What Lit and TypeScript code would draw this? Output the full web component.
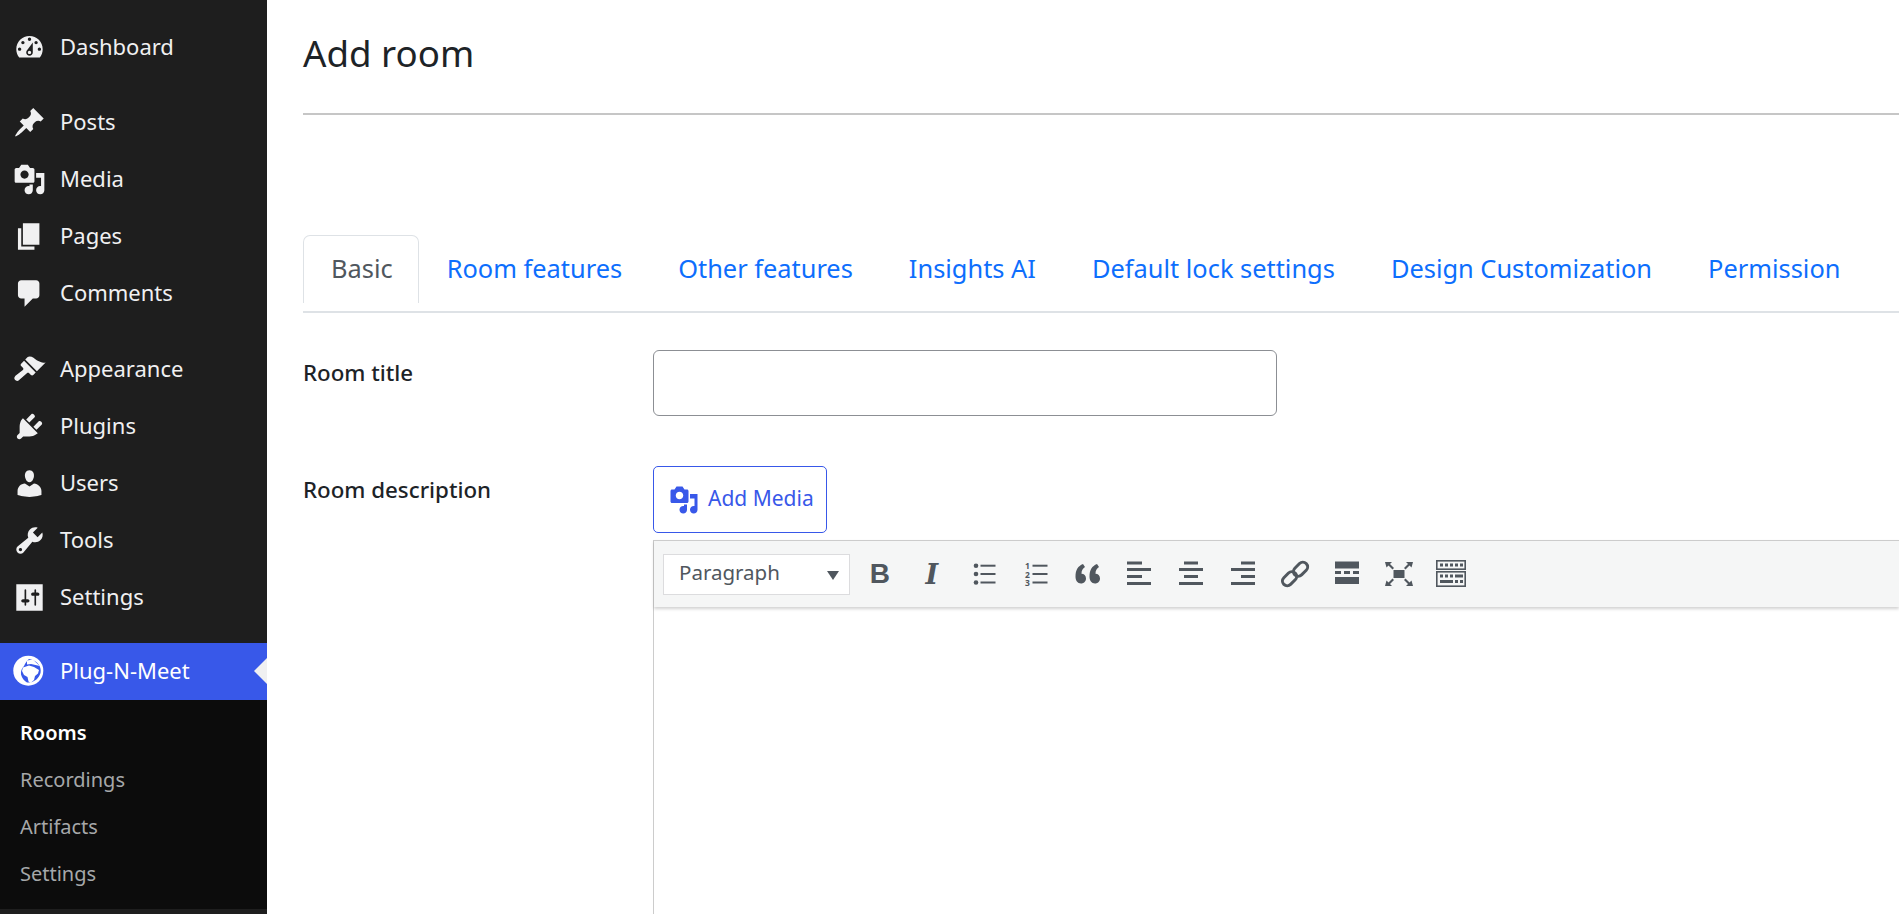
import { LitElement, html, svg, css } from "lit";
import { customElement } from "lit/decorators.js";

const dash = (d: string) => html`<svg class="dash" viewBox="0 0 20 20"><path fill-rule="evenodd" d=${d}></path></svg>`;

const MEDIA =
  "M13 11V4c0-.55-.45-1-1-1h-1.67L9 1H5L3.67 3H2c-.55 0-1 .45-1 1v7c0 .55.45 1 1 1h10c.55 0 1-.45 1-1zM7 4.5c1.38 0 2.5 1.12 2.5 2.5S8.38 9.5 7 9.5 4.5 8.38 4.5 7 5.62 4.5 7 4.5zM14 6h5v10.5c0 1.38-1.12 2.5-2.5 2.5S14 17.88 14 16.5s1.12-2.5 2.5-2.5c.17 0 .34.02.5.05V9h-3V6zm-4 8.05V13h2v3.5c0 1.38-1.12 2.5-2.5 2.5S7 17.88 7 16.5 8.12 14 9.5 14c.17 0 .34.02.5.05z";

const GROUP_ONE = [
  ["Posts", "M10.44 3.02l1.82-1.82 6.36 6.35-1.83 1.82c-1.05-.68-2.48-.57-3.41.36l-.75.75c-.92.93-1.04 2.35-.35 3.41l-1.83 1.82-2.41-2.41-2.8 2.79c-.42.42-3.38 2.71-3.8 2.29s1.86-3.39 2.28-3.81l2.79-2.79L4.1 9.36l1.83-1.82c1.05.69 2.48.57 3.4-.36l.75-.75c.93-.92 1.05-2.35.36-3.41z"],
  ["Media", MEDIA],
  ["Pages", "M6 15V2h10v13H6zm-1 1h8v2H3V5h2v11z"],
  ["Comments", "M5 2h9c1.1 0 2 .9 2 2v7c0 1.1-.9 2-2 2h-2l-5 5v-5H5c-1.1 0-2-.9-2-2V4c0-1.1.9-2 2-2z"],
];

const GROUP_TWO = [
  ["Appearance", "M14.48 11.06L7.41 3.99l1.5-1.5c.5-.56 2.3-.47 3.51.32 1.21.8 1.43 1.28 2.91 2.1 1.18.64 2.45 1.26 4.45.85zm-.71.71L6.7 4.7 4.93 6.47c-.39.39-.39 1.02 0 1.41l1.06 1.06c.39.39.39 1.03 0 1.42L1.5 13.8c-.9.9-.9 1.9-.2 2.6.7.7 1.7.7 2.6-.2l4.500-3.900c.39-.39 1.03-.39 1.42 0l1.06 1.06c.39.39 1.02.39 1.41 0z"],
  ["Plugins", "M13.11 4.36L9.87 7.6 8 5.73l3.24-3.24c.35-.34 1.05-.2 1.56.32.52.51.66 1.21.31 1.55zm-8 1.77l.91-1.12 9.01 9.01-1.19.84c-.71.71-2.63 1.16-3.82 1.16H6.14L4.9 17.26c-.59.59-1.54.59-2.12 0-.59-.58-.59-1.53 0-2.12l1.24-1.24v-3.88c0-1.13.52-3.13 1.09-3.89zm7.26 3.97l3.24-3.24c.34-.35 1.04-.21 1.55.31.52.51.66 1.21.31 1.55l-3.24 3.25z"],
  ["Users", "M10 9.25c-2.27 0-2.73-3.44-2.73-3.44C7 4.02 7.82 2 9.97 2c2.16 0 2.98 2.02 2.71 3.81 0 0-.41 3.44-2.68 3.44zm0 2.57L12.72 10c2.39 0 4.52 2.33 4.52 4.53v2.49s-3.65 1.13-7.24 1.13c-3.65 0-7.24-1.13-7.24-1.13v-2.49c0-2.25 1.94-4.48 4.47-4.48z"],
  ["Tools", "M16.68 9.77c-1.34 1.34-3.3 1.67-4.95.99l-5.41 6.52c-.99.99-2.59.99-3.58 0s-.99-2.59 0-3.57l6.52-5.42c-.68-1.65-.35-3.61.99-4.95 1.28-1.28 3.12-1.62 4.72-1.06l-2.89 2.89 2.82 2.82 2.86-2.87c.53 1.58.18 3.39-1.08 4.65zM3.81 16.21c.4.39 1.03.39 1.42 0 .4-.4.4-1.03 0-1.42-.39-.4-1.02-.4-1.42 0-.39.39-.39 1.02 0 1.42z"],
  ["Settings", "M18 16V2H2v16h16zM8 11h1c.55 0 1 .45 1 1s-.45 1-1 1H8v1.5c0 .28-.22.5-.5.5s-.5-.22-.5-.5V13H6c-.55 0-1-.45-1-1s.45-1 1-1h1V5.5c0-.28.22-.5.5-.5s.5.22.5.5V11zm5-2h-1c-.55 0-1-.45-1-1s.45-1 1-1h1V5.5c0-.28.22-.5.5-.5s.5.22.5.5V7h1c.55 0 1 .45 1 1s-.45 1-1 1h-1v5.500c0 .28-.22.5-.5.5s-.5-.22-.5-.5V9z"],
];

const DASHBOARD =
  "M3.76 16h12.48c1.1-1.37 1.76-3.11 1.76-5 0-4.42-3.58-8-8-8s-8 3.58-8 8c0 1.89.66 3.63 1.76 5zM10 4c.55 0 1 .45 1 1s-.45 1-1 1-1-.45-1-1 .45-1 1-1zM6 6c.55 0 1 .45 1 1s-.45 1-1 1-1-.45-1-1 .45-1 1-1zm8 0c.55 0 1 .45 1 1s-.45 1-1 1-1-.45-1-1 .45-1 1-1zm-5.37 5.55L12 7v6c0 1.1-.9 2-2 2s-2-.9-2-2c0-.57.24-1.08.63-1.45zM4 10c.55 0 1 .45 1 1s-.45 1-1 1-1-.45-1-1 .45-1 1-1zm12 0c.55 0 1 .45 1 1s-.45 1-1 1-1-.45-1-1 .45-1 1-1zm-5 3c0-.55-.45-1-1-1s-1 .45-1 1 .45 1 1 1 1-.45 1-1z";

const SUBMENU = ["Rooms", "Recordings", "Artifacts", "Settings"];
const TABS = ["Basic", "Room features", "Other features", "Insights AI", "Default lock settings", "Design Customization", "Permission"];

const tool = (body: unknown) => html`<span class="tool"><svg viewBox="0 0 30 30">${body}</svg></span>`;

// toolbar icons, drawn round the middle of a 30x30 box
const TOOL_ICONS = [
  tool(svg`<circle cx="7" cy="6.7" r="2.3"/><circle cx="7" cy="15" r="2.3"/><circle cx="7" cy="23.5" r="2.3"/>
    <rect x="11.500" y="5.700" width="15" height="2"/><rect x="11.500" y="14" width="15" height="2"/><rect x="11.500" y="22.500" width="15" height="2"/>`),
  tool(svg`<text x="6.500" y="10" class="num">1</text><text x="6.500" y="18.500" class="num">2</text><text x="6.500" y="27" class="num">3</text>
    <rect x="11.500" y="5.700" width="15" height="2"/><rect x="11.500" y="14" width="15" height="2"/><rect x="11.500" y="22.500" width="15" height="2"/>`),
  tool(svg`<path d="M10 5C5 7 2.500 11 2.500 17.500 2.500 21.500 4.500 24.500 8 24.500c3 0 5-2.200 5-5 0-2.800-2-4.800-4.500-4.800C8.400 11.500 9.800 9.500 12 8z"/>
    <path d="M24 5c-5 2-7.500 6-7.500 12.500 0 4 2 7 5.500 7 3 0 5-2.200 5-5 0-2.800-2-4.800-4.500-4.800C22.400 11.500 23.800 9.500 26 8z"/>`),
  tool(svg`<rect x="3" y="2.500" width="15" height="3"/><rect x="3" y="9" width="24" height="3"/><rect x="3" y="16" width="15" height="3"/><rect x="3" y="23" width="24" height="3"/>`),
  tool(svg`<rect x="8" y="2.500" width="14" height="3"/><rect x="3" y="9" width="24" height="3"/><rect x="8" y="16" width="14" height="3"/><rect x="3" y="23" width="24" height="3"/>`),
  tool(svg`<rect x="13" y="2.500" width="14" height="3"/><rect x="3" y="9" width="24" height="3"/><rect x="13" y="16" width="14" height="3"/><rect x="3" y="23" width="24" height="3"/>`),
  tool(svg`<g fill="none" stroke="#50575e" stroke-width="3">
    <rect x="1.500" y="15" width="16" height="9.500" rx="4.700" transform="rotate(-45 9.500 19.700)"/>
    <rect x="12.500" y="5.500" width="16" height="9.500" rx="4.700" transform="rotate(-45 20.500 10.200)"/></g>`),
  tool(svg`<rect x="3" y="2.500" width="24" height="7"/><rect x="3" y="12" width="6" height="3"/><rect x="12" y="12" width="6" height="3"/><rect x="21" y="12" width="6" height="3"/><rect x="3" y="18" width="24" height="7"/>`),
  tool(svg`<rect x="9.500" y="11" width="11" height="8"/>
    <path d="M1 3h7l-2 2 4 4-1.500 1.500-4-4-2 2zM29 3h-7l2 2-4 4 1.500 1.500 4-4 2 2zM1 27h7l-2-2 4-4-1.500-1.500-4 4-2-2zM29 27h-7l2-2-4-4 1.500-1.500 4 4 2-2z"/>`),
  tool(svg`<g fill="none" stroke="#50575e" stroke-width="1.600"><rect x=".800" y="1.800" width="28.400" height="8.400"/><rect x=".800" y="12.800" width="28.400" height="14.400"/></g>
    <rect x="4" y="4.500" width="3" height="3"/><rect x="9" y="4.500" width="3" height="3"/><rect x="14" y="4.500" width="3" height="3"/><rect x="19" y="4.500" width="3" height="3"/><rect x="24" y="4.500" width="3" height="3"/>
    <rect x="4" y="15.500" width="3" height="3"/><rect x="9" y="15.500" width="3" height="3"/><rect x="14" y="15.500" width="3" height="3"/><rect x="19" y="15.500" width="8" height="3"/>
    <rect x="4" y="21" width="13" height="3"/><rect x="19" y="21" width="3" height="3"/><rect x="24" y="21" width="3" height="3"/>`),
];

@customElement("app-root")
export class AppRoot extends LitElement {
  static styles = css`
    :host {
      display: flex;
      height: 914px;
      overflow: hidden;
      background: #fff;
      font-family: "Noto Sans", sans-serif;
    }

    .sidebar {
      flex: 0 0 267px;
      background: #1e1e1e;
      color: #f0f0f1;
      padding-top: 19px;
      box-sizing: border-box;
    }

    .group {
      margin-bottom: 18px;
    }

    .group.second {
      margin-bottom: 17px;
    }

    .group.first {
      margin-bottom: 19px;
    }

    .item {
      position: relative;
      display: flex;
      align-items: center;
      height: 57px;
      padding-left: 13px;
      font-size: 22px;
    }

    .lift {
      margin-bottom: 3px;
    }

    .dash {
      width: 33px;
      height: 33px;
      margin-right: 14px;
      fill: currentColor;
      flex: none;
    }

    .active {
      background: #3858e9;
      color: #fff;
    }

    .active::after {
      content: "";
      position: absolute;
      right: 0;
      top: 15px;
      border: 13.500px solid transparent;
      border-right-color: #f0f0f1;
      border-left-width: 0;
    }

    .submenu {
      background: #0c0c0c;
      padding: 10px 0 11px 20px;
    }

    .submenu div {
      height: 47px;
      line-height: 45px;
      font-size: 20px;
      color: #a6a8aa;
    }

    .submenu .current {
      color: #fff;
      font-weight: 600;
    }

    .main {
      flex: 1;
      min-width: 0;
      padding-left: 36px;
    }

    .head {
      height: 113px;
      border-bottom: 2px solid #c6c6c6;
    }

    h1 {
      margin: 0;
      padding-top: 27px;
      font-size: 36.700px;
      line-height: 52px;
      font-weight: 400;
      color: #1d2327;
    }

    .tabs {
      display: flex;
      margin-top: 120px;
      height: 68px;
      padding-bottom: 8px;
      border-bottom: 2px solid #dee2e6;
      font-size: 25.400px;
      color: #0d6efd;
    }

    .tab {
      padding: 0 28px;
      line-height: 66px;
      white-space: nowrap;
    }

    .tab.on {
      color: #50575e;
      border: 1.500px solid #dee2e6;
      border-bottom: 0;
      border-radius: 7px 7px 0 0;
      padding: 0 25px 0 27px;
      line-height: 64px;
    }

    .row {
      display: grid;
      grid-template-columns: 350px 1fr;
    }

    .row label {
      font-size: 22.300px;
      font-weight: 500;
      color: #1d2327;
    }

    .row-title {
      margin-top: 37px;
      height: 116px;
    }

    .row-title label {
      line-height: 46px;
    }

    .row-desc label {
      line-height: 48px;
    }

    .field {
      width: 624px;
      height: 66px;
      border: 1.500px solid #8c8f94;
      border-radius: 6px;
      box-sizing: border-box;
    }

    .add-media {
      display: flex;
      align-items: center;
      width: 174px;
      height: 67px;
      box-sizing: border-box;
      border: 1.500px solid #3858e9;
      border-radius: 5px;
      padding-left: 15px;
      font-size: 21px;
      color: #3858e9;
    }

    .add-media svg {
      width: 30px;
      height: 30px;
      margin-right: 9px;
      fill: currentColor;
    }

    .editor {
      margin-top: 7px;
      height: 400px;
      border-left: 1.500px solid #ccc;
    }

    .toolbar {
      display: flex;
      align-items: center;
      height: 67px;
      box-sizing: border-box;
      padding-left: 9px;
      background: #f5f6f6;
      border-top: 1.500px solid #ccc;
      box-shadow: 0 2px 3px rgba(0, 0, 0, 0.18);
    }

    .select {
      position: relative;
      flex: none;
      width: 187px;
      height: 41px;
      line-height: 34px;
      box-sizing: border-box;
      margin-right: 4px;
      padding-left: 15px;
      background: #fff;
      border: 1.500px solid #dcdcde;
      font-size: 20.500px;
      color: #50575e;
    }

    .select::after {
      content: "";
      position: absolute;
      right: 10px;
      top: 16px;
      border: 6px solid transparent;
      border-top: 9px solid #50575e;
      border-bottom: 0;
    }

    .tool {
      display: flex;
      align-items: center;
      justify-content: center;
      flex: none;
      width: 51.900px;
      height: 40px;
      color: #50575e;
      fill: #50575e;
    }

    .tool svg {
      width: 30px;
      height: 30px;
    }

    .num {
      font-size: 8.500px;
      font-weight: 700;
      text-anchor: middle;
    }

    .bold {
      font: 700 28px "Liberation Sans", sans-serif;
    }

    .italic {
      font: italic 700 27px "DejaVu Serif", serif;
    }
  `;

  render() {
    return html`
      <nav class="sidebar">
        <div class="group"><div class="item">${dash(DASHBOARD)}<span class="lift">Dashboard</span></div></div>
        <div class="group first">${GROUP_ONE.map(([t, d]) => html`<div class="item">${dash(d)}<span class="lift">${t}</span></div>`)}</div>
        <div class="group second">${GROUP_TWO.map(([t, d]) => html`<div class="item">${dash(d)}<span class="lift">${t}</span></div>`)}</div>
        <div class="item active">
          <svg class="dash" viewBox="0 0 33 33">
            <circle cx="15.300" cy="15.700" r="15" fill="#fff"></circle>
            <path fill="#3858e9" d="M11 11C9 13 7.500 16 8 19.500 9 23 11 26 14 27.500L16 27.500C22 27 26 23 27.500 18 28 15 27.500 12 26 10 24 7 20 4.500 16 4 14 5.500 12.500 8 11 11Z"></path>
            <path fill="#fff" d="M10 12.500L16 10.500 21 12 26 15 25 18.500 22 21 21 25 17.500 28 15.500 26.500 14.500 22 11 20 9 16ZM14 5.500L20 4.500 23 7.500 27 11 22.500 10 18 9 14 9.500Z"></path>
          </svg>
          <span class="lift">Plug-N-Meet</span>
        </div>
        <div class="submenu">
          ${SUBMENU.map((s, i) => html`<div class=${i === 0 ? "current" : ""}>${s}</div>`)}
        </div>
      </nav>
      <main class="main">
        <div class="head"><h1>Add room</h1></div>
        <div class="tabs">
          ${TABS.map((t, i) => html`<div class="tab ${i === 0 ? "on" : ""}">${t}</div>`)}
        </div>
        <div class="row row-title">
          <label>Room title</label>
          <div class="field"></div>
        </div>
        <div class="row row-desc">
          <label>Room description</label>
          <div>
            <div class="add-media">
              <svg viewBox="0 0 20 20"><path fill-rule="evenodd" d=${MEDIA}></path></svg>
              <span class="lift">Add Media</span>
            </div>
            <div class="editor">
              <div class="toolbar">
                <div class="select">Paragraph</div>
                <span class="tool bold">B</span>
                <span class="tool italic">I</span>
                ${TOOL_ICONS}
              </div>
            </div>
          </div>
        </div>
      </main>
    `;
  }
}
